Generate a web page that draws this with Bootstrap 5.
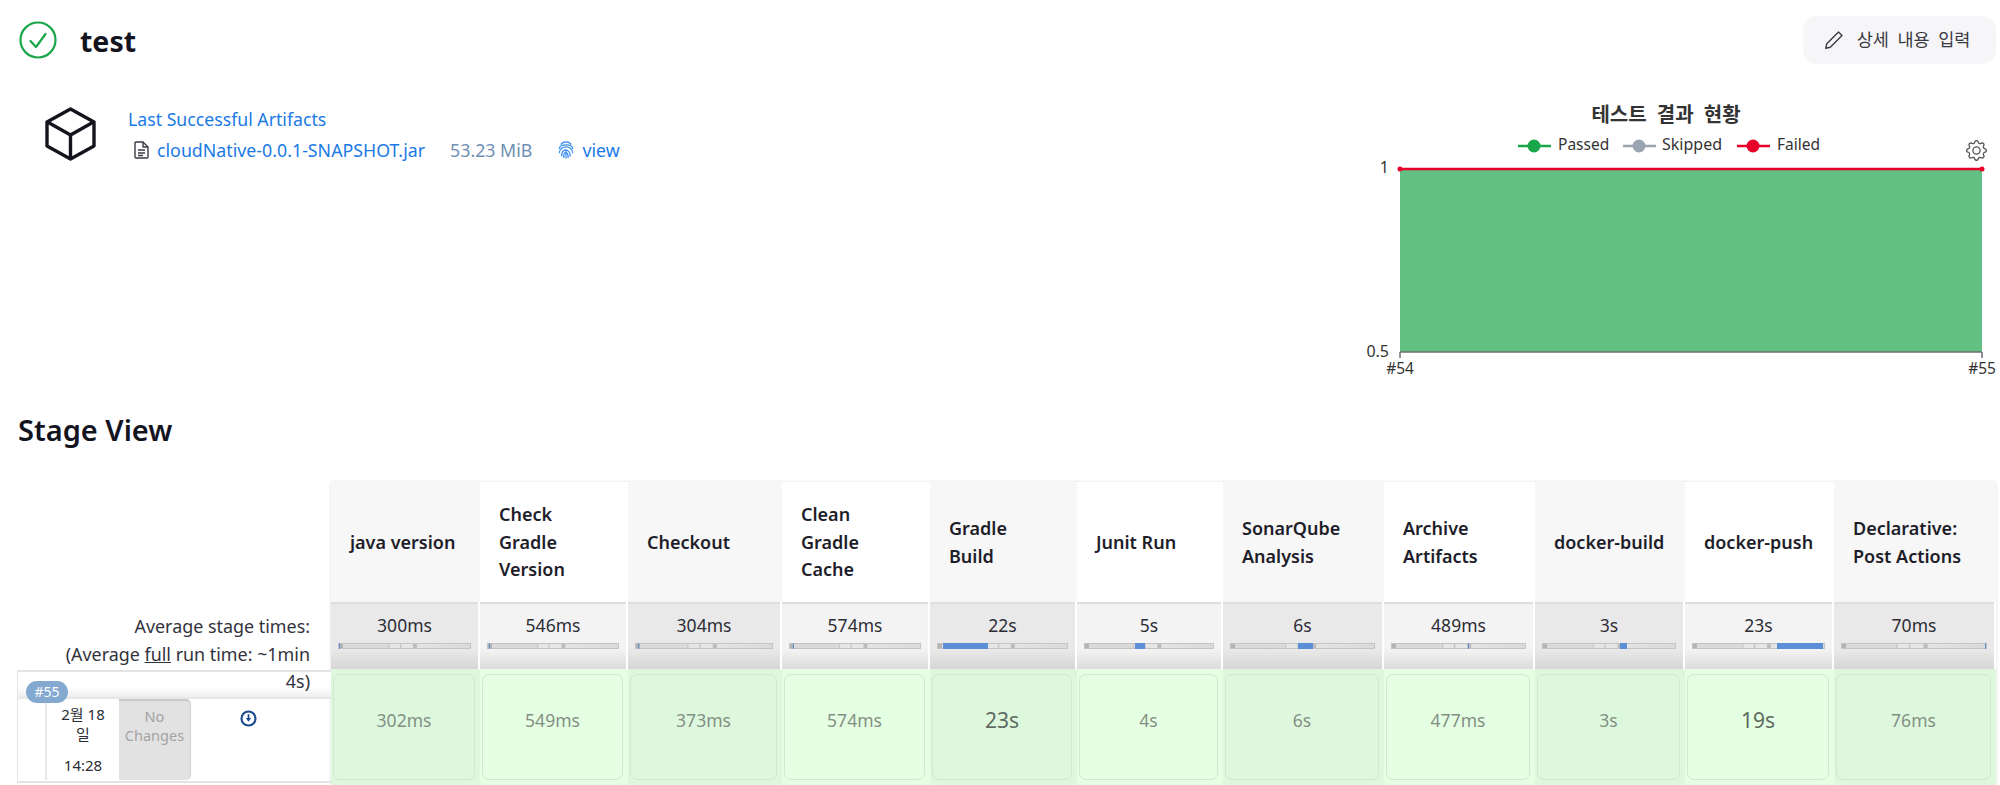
<!DOCTYPE html>
<html lang="ko">
<head>
<meta charset="utf-8">
<title>test</title>
<link href="https://cdn.jsdelivr.net/npm/bootstrap@5.3.0/dist/css/bootstrap.min.css" rel="stylesheet">
<style>
html,body{height:785px;overflow:hidden;background:#fff}
body{font-family:"Noto Sans","Noto Sans CJK KR",sans-serif;color:#14141f;font-size:16px;line-height:27.5px}
a{color:#1b7ae6;text-decoration:none}
.top-strip{padding:16px 4px 0 19px;height:64px}
.job-name{font-size:28.5px;font-weight:700;line-height:48px;margin:1px 0 0 23px;color:#14141f}
.edit-btn{width:193px;height:48px;background:#f6f6f8;border:0;border-radius:14px;color:#3a3a44;font-size:17.5px;word-spacing:4px;padding:0 5px 0 0;gap:13px}
.info-strip{height:290px;margin-top:32px}
.cube-ico{margin:11px 32px 0 45px}
.art-name{font-size:17.7px;line-height:24px;margin-top:11px}
.art-file{line-height:24px;margin-top:7px;margin-left:6px;font-size:17.8px}
.art-size{color:#6f8fb5;margin-left:25px}
.view-link{margin:0 8px 0 26px}
.chart-box{width:640px;height:290px}
.chart-box text{font-family:"Noto Sans","Noto Sans CJK KR",sans-serif;fill:#333}
.stage-title{font-size:29px;font-weight:600;line-height:32px;margin:28px 0 36px 18px;color:#14141f}
.stage-left{width:313px;margin-left:18px;padding-top:120px}
.avg-note{height:68px;padding:11px 21px 0 0;text-align:right;color:#33333d;font-size:17.9px}
.avg-note u{text-decoration:underline}
.run-box{border-left:1px solid #e4e4e4;border-top:2px solid #e4e4e4;border-bottom:2px solid #e4e4e4;height:113px;margin-top:0;margin-left:-1px}
.run-strip{height:27px;line-height:18px;text-align:right;padding-right:21px;background:linear-gradient(#fff 60%,#eee);color:#33333d;border-bottom:2px solid #e8e8e8;font-size:17.9px}
.run-badge{top:9px;left:8px;width:42px;height:22px;border-radius:12px;background:#84a9d1;color:#fff;font-size:14px;line-height:22px;text-align:center}
.run-gutter{width:29px;border-right:2px solid #e8e8e8}
.run-date{width:72px;text-align:center;font-size:15px;line-height:20px;padding-top:5px;color:#2c2c34}
.run-date span{display:block;margin-top:11px}
.no-change{width:72px;height:81px;background:#e2e2e2;border-top:2px solid #c9c9c9;border-right:1px solid #d0d0d0;border-radius:0 5px 5px 0;color:#a3a3a3;font-size:14.5px;line-height:19px;text-align:center;padding-top:6px}
.run-ico{padding:5px 0 0 49px}
.stage-grid{display:grid;width:1665px;grid-template-columns:149px 148px 154px 148px 147px 146px 161px 151px 150px 149px 162px;grid-template-rows:120px 67px 116px;box-shadow:0 0 3px rgba(0,0,0,.14)}
.head-cell{display:flex;align-items:center;padding:1px 0 0 19px;font-weight:600;font-size:18px;color:#1e1e2a;background:#f7f7f7}
.head-cell.alt{background:#fff}
.avg-cell{background:linear-gradient(#e9e9e9 70%,#d6d6d6);border-top:2px solid #dedede;padding:8px 7px 0 7px;text-align:center;font-size:17.5px;color:#2d2d36;margin-right:2px}
.avg-cell.alt{background:linear-gradient(#f3f3f3 70%,#dcdcdc)}
.time-bar{height:4px;margin-top:3px;background:linear-gradient(90deg,#b4b4b4 3%,#dadada 3%,#dadada 37.500%,#c4c4c4 38%,#e6e6e6 39%,#e6e6e6 46%,#c4c4c4 47%,#e6e6e6 48%,#e6e6e6 56%,#bcbcbc 57%,#bcbcbc 59%,#e4e4e4 60%,#dadada 100%);border:1px solid #c4c4c4;box-sizing:content-box}
.bar-fill{top:-1px;bottom:-1px;background:#5b8fd6}
.step-wrap{background:#ddf8dd;padding:5px 5px 5px 2px}
.step-wrap.alt{background:#e5ffe3}
.step-box{height:106px;border:1.5px solid #d3e6d3;border-radius:7px;color:#848f84;font-size:17.5px;background:#ddf8dd;padding-bottom:13px}
.alt .step-box{background:#e5ffe3}
.step-box.large{font-size:21px;color:#5f6b5f}
</style>
</head>
<body>
<div class="top-strip d-flex justify-content-between align-items-center">
  <div class="d-flex align-items-center">
    <svg width="38" height="38" viewBox="0 0 38 38" fill="none" stroke="#1aa64a" stroke-width="2.2"><circle cx="19" cy="19" r="17.5"/><path d="M11.5 20l5.5 6 9.5-13" stroke-linecap="round" stroke-linejoin="round"/></svg>
    <h1 class="job-name">test</h1>
  </div>
  <button class="edit-btn d-flex align-items-center justify-content-center" type="button">
    <svg width="20" height="22" viewBox="0 0 16 16" fill="none" stroke="#3a3a44" stroke-width="1.1" stroke-linejoin="round"><path d="M11.6 1.6l2.8 2.8L5 13.8 1.4 14.6l.8-3.6z"/></svg>
    <span>상세 내용 입력</span>
  </button>
</div>

<div class="info-strip d-flex justify-content-between">
  <div class="d-flex align-items-start">
    <svg class="cube-ico" width="51" height="54" viewBox="0 0 51 54" fill="none" stroke="#14141f" stroke-width="3.4" stroke-linejoin="round"><path d="M25.5 2L49 15v24L25.5 52 2 39V15z"/><path d="M2.5 15l23 13 23-13M25.5 28v24"/></svg>
    <div>
      <div class="art-name"><a href="#">Last Successful Artifacts</a></div>
      <div class="art-file d-flex align-items-center">
        <svg class="me-2" width="15" height="18" viewBox="0 0 15 18" fill="none" stroke="#3a3a44" stroke-width="1.4" stroke-linejoin="round"><path d="M2 1h7l5 5v10a1 1 0 0 1-1 1H2a1 1 0 0 1-1-1V2a1 1 0 0 1 1-1z"/><path d="M9 1v5h5M4 9h7M4 12h7M4 14.5h5"/></svg>
        <a href="#">cloudNative-0.0.1-SNAPSHOT.jar</a>
        <span class="art-size">53.23 MiB</span>
        <svg class="view-link" width="16" height="20" viewBox="0 0 15 18" fill="none" stroke="#3d8ff0" stroke-width="1.2"><path d="M2.5 4C5 .5 10 .5 12.5 4M1 8c1-5 12-5 13 0M1.2 12c0-8 12.600-8 12.600 0M3.500 15c-1-8 8-8 8 0M5.600 16.500c-1.500-7 4.500-7 3.800 0M7.500 17V9"/></svg>
        <a href="#">view</a>
      </div>
    </div>
  </div>
  <svg class="chart-box" viewBox="0 0 640 290">
    <text x="306" y="26" text-anchor="middle" font-size="20" font-weight="700" word-spacing="5">테스트 결과 현황</text>
    <g stroke-width="2.5">
      <path d="M158 50h33" stroke="#1aa64a"/><circle cx="174" cy="50" r="6.500" fill="#1aa64a"/>
      <path d="M263 50h33" stroke="#9aa5b1"/><circle cx="279" cy="50" r="6.500" fill="#9aa5b1"/>
      <path d="M377 50h33" stroke="#e8002a"/><circle cx="393" cy="50" r="6.500" fill="#e8002a"/>
    </g>
    <text x="198" y="54" font-size="15.500">Passed</text>
    <text x="302" y="54" font-size="16">Skipped</text>
    <text x="417" y="54" font-size="15.500">Failed</text>
    <svg x="606" y="44" width="21" height="21" viewBox="0 0 16 16" fill="#555"><path d="M8 4.754a3.246 3.246 0 1 0 0 6.492 3.246 3.246 0 0 0 0-6.492zM5.754 8a2.246 2.246 0 1 1 4.492 0 2.246 2.246 0 0 1-4.492 0z"/><path d="M9.796 1.343c-.527-1.79-3.065-1.79-3.592 0l-.094.319a.873.873 0 0 1-1.255.52l-.292-.16c-1.64-.892-3.433.902-2.54 2.541l.159.292a.873.873 0 0 1-.52 1.255l-.319.094c-1.79.527-1.79 3.065 0 3.592l.319.094a.873.873 0 0 1 .52 1.255l-.16.292c-.892 1.64.901 3.434 2.541 2.54l.292-.159a.873.873 0 0 1 1.255.52l.094.319c.527 1.79 3.065 1.79 3.592 0l.094-.319a.873.873 0 0 1 1.255-.52l.292.16c1.64.893 3.434-.902 2.54-2.541l-.159-.292a.873.873 0 0 1 .52-1.255l.319-.094c1.79-.527 1.79-3.065 0-3.592l-.319-.094a.873.873 0 0 1-.52-1.255l.16-.292c.893-1.64-.902-3.433-2.541-2.54l-.292.159a.873.873 0 0 1-1.255-.52l-.094-.319zm-2.633.283c.246-.835 1.428-.835 1.674 0l.094.319a1.873 1.873 0 0 0 2.693 1.115l.291-.16c.764-.415 1.6.42 1.184 1.185l-.159.292a1.873 1.873 0 0 0 1.116 2.692l.318.094c.835.246.835 1.428 0 1.674l-.319.094a1.873 1.873 0 0 0-1.115 2.693l.16.291c.415.764-.42 1.6-1.185 1.184l-.291-.159a1.873 1.873 0 0 0-2.693 1.116l-.094.318c-.246.835-1.428.835-1.674 0l-.094-.319a1.873 1.873 0 0 0-2.692-1.115l-.292.16c-.764.415-1.6-.42-1.184-1.185l.159-.291A1.873 1.873 0 0 0 1.945 8.93l-.319-.094c-.835-.246-.835-1.428 0-1.674l.319-.094A1.873 1.873 0 0 0 3.06 4.377l-.16-.292c-.415-.764.42-1.6 1.185-1.184l.292.159a1.873 1.873 0 0 0 2.692-1.115l.094-.319z"/></svg>
    <rect x="40" y="73" width="582" height="183" fill="#61c082"/>
    <path d="M40 73H622" stroke="#e8002a" stroke-width="2.500"/>
    <circle cx="40" cy="73" r="2.500" fill="#e8002a"/><circle cx="622" cy="73" r="2.500" fill="#e8002a"/>
    <path d="M40 256H622M40 256v6M622 256v6" stroke="#6e7079" stroke-width="1.500" fill="none"/>
    <text x="29" y="77" font-size="16" text-anchor="end">1</text>
    <text x="29" y="261" font-size="16" text-anchor="end">0.5</text>
    <text x="40" y="278" font-size="15.500" text-anchor="middle">#54</text>
    <text x="622" y="278" font-size="15.500" text-anchor="middle">#55</text>
  </svg>
</div>

<h2 class="stage-title">Stage View</h2>
<div class="d-flex">
  <div class="stage-left flex-shrink-0">
    <div class="avg-note">Average stage times:<br>(Average <u>full</u> run time: ~1min</div>
    <div class="run-box position-relative">
      <div class="run-strip">4s)</div>
      <div class="run-badge position-absolute">#55</div>
      <div class="d-flex">
        <div class="run-gutter"></div>
        <div class="run-date">2월 18<br>일<span>14:28</span></div>
        <div class="no-change">No Changes</div>
        <div class="run-ico"><svg width="17" height="17" viewBox="0 0 16 16" fill="none"><circle cx="8" cy="8" r="6.600" stroke="#1a4b8f" stroke-width="2"/><path d="M8 4v5" stroke="#1a4b8f" stroke-width="1.600"/><path d="M5.500 7.500h5L8 11z" fill="#1a4b8f"/></svg></div>
      </div>
    </div>
  </div>
  <div class="stage-grid flex-shrink-0">
    <div class="head-cell"><span>java version</span></div>
    <div class="head-cell alt"><span>Check<br>Gradle<br>Version</span></div>
    <div class="head-cell"><span>Checkout</span></div>
    <div class="head-cell alt"><span>Clean<br>Gradle<br>Cache</span></div>
    <div class="head-cell"><span>Gradle<br>Build</span></div>
    <div class="head-cell alt"><span>Junit Run</span></div>
    <div class="head-cell"><span>SonarQube<br>Analysis</span></div>
    <div class="head-cell alt"><span>Archive<br>Artifacts</span></div>
    <div class="head-cell"><span>docker-build</span></div>
    <div class="head-cell alt"><span>docker-push</span></div>
    <div class="head-cell"><span>Declarative:<br>Post Actions</span></div>

    <div class="avg-cell">300ms<div class="time-bar position-relative"><div class="bar-fill position-absolute" style="left:0;width:1%"></div></div></div>
    <div class="avg-cell alt">546ms<div class="time-bar position-relative"><div class="bar-fill position-absolute" style="left:.5%;width:1.2%"></div></div></div>
    <div class="avg-cell">304ms<div class="time-bar position-relative"><div class="bar-fill position-absolute" style="left:1.4%;width:1%"></div></div></div>
    <div class="avg-cell alt">574ms<div class="time-bar position-relative"><div class="bar-fill position-absolute" style="left:2%;width:1.2%"></div></div></div>
    <div class="avg-cell">22s<div class="time-bar position-relative"><div class="bar-fill position-absolute" style="left:3.800%;width:34.600%"></div></div></div>
    <div class="avg-cell alt">5s<div class="time-bar position-relative"><div class="bar-fill position-absolute" style="left:39%;width:8%"></div></div></div>
    <div class="avg-cell">6s<div class="time-bar position-relative"><div class="bar-fill position-absolute" style="left:47%;width:10.500%"></div></div></div>
    <div class="avg-cell alt">489ms<div class="time-bar position-relative"><div class="bar-fill position-absolute" style="left:57%;width:1%"></div></div></div>
    <div class="avg-cell">3s<div class="time-bar position-relative"><div class="bar-fill position-absolute" style="left:58%;width:6%"></div></div></div>
    <div class="avg-cell alt">23s<div class="time-bar position-relative"><div class="bar-fill position-absolute" style="left:64%;width:35.500%"></div></div></div>
    <div class="avg-cell">70ms<div class="time-bar position-relative"><div class="bar-fill position-absolute" style="left:99.300%;width:.7%"></div></div></div>

    <div class="step-wrap"><div class="step-box d-flex align-items-center justify-content-center">302ms</div></div>
    <div class="step-wrap alt"><div class="step-box d-flex align-items-center justify-content-center">549ms</div></div>
    <div class="step-wrap"><div class="step-box d-flex align-items-center justify-content-center">373ms</div></div>
    <div class="step-wrap alt"><div class="step-box d-flex align-items-center justify-content-center">574ms</div></div>
    <div class="step-wrap"><div class="step-box large d-flex align-items-center justify-content-center">23s</div></div>
    <div class="step-wrap alt"><div class="step-box d-flex align-items-center justify-content-center">4s</div></div>
    <div class="step-wrap"><div class="step-box d-flex align-items-center justify-content-center">6s</div></div>
    <div class="step-wrap alt"><div class="step-box d-flex align-items-center justify-content-center">477ms</div></div>
    <div class="step-wrap"><div class="step-box d-flex align-items-center justify-content-center">3s</div></div>
    <div class="step-wrap alt"><div class="step-box large d-flex align-items-center justify-content-center">19s</div></div>
    <div class="step-wrap"><div class="step-box d-flex align-items-center justify-content-center">76ms</div></div>
  </div>
</div>
</body>
</html>
